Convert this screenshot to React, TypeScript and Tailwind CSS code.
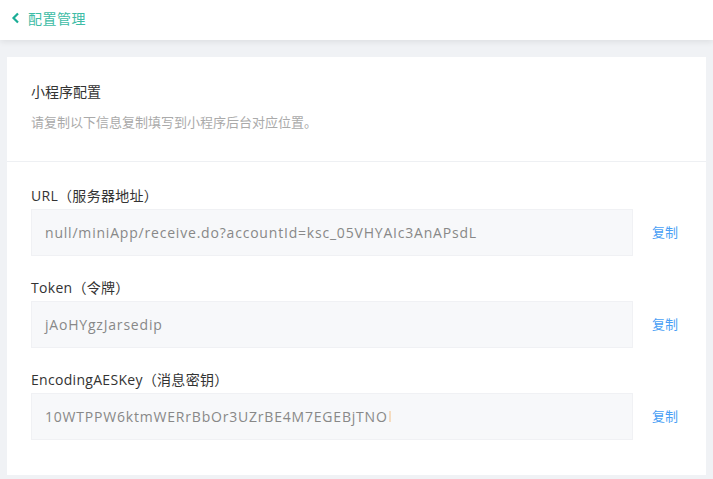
import React from "react";

const rows = [
  { label: "URL（服务器地址）", value: "null/miniApp/receive.do?accountId=ksc_05VHYAIc3AnAPsdL", clip: false },
  { label: "Token（令牌）", value: "jAoHYgzJarsedip", clip: false },
  { label: "EncodingAESKey（消息密钥）", value: "10WTPPW6ktmWERrBbOr3UZrBE4M7EGEBjTNO", clip: true },
];

export default function App() {
  return (
    <div
      className="w-[713px] h-[479px] bg-[#f0f2f5] overflow-hidden"
      style={{ fontFamily: '"Open Sans", "Noto Sans CJK SC", sans-serif' }}
    >
      <div className="h-[40px] bg-white flex items-center pl-[11px] pb-[4px] shadow-[0_2px_6px_rgba(0,0,0,0.08)] relative z-10">
        <svg width="10" height="12" viewBox="0 0 10 12" className="mr-[7px]">
          <path d="M7 1.5 L2.5 6 L7 10.5" fill="none" stroke="#1aad96" strokeWidth="2.2" />
        </svg>
        <span className="text-[14px] text-[#3dbca6] tracking-[0.5px]">配置管理</span>
      </div>
      <div className="mx-[7px] mt-[17px] h-[418px] bg-white">
        <div className="px-[24px] pt-[22px] h-[105px] border-b border-[#eef0f3]">
          <div className="text-[14px] text-[#333] leading-[26px]">小程序配置</div>
          <div className="text-[13px] text-[#aaa] mt-[7px] leading-[20px]">请复制以下信息复制填写到小程序后台对应位置。</div>
        </div>
        <div className="pl-[24px] pt-[24px] flex flex-col gap-[22px]">
          {rows.map((r) => (
            <div key={r.label}>
              <div className="text-[14px] text-[#333] leading-[20px] mb-[3px] tracking-[0.3px]">{r.label}</div>
              <div className="flex items-center">
                <div className="w-[602px] h-[47px] bg-[#f7f8fa] border border-[#f0f1f4] flex items-center pl-[13px]">
                  <span className="text-[14px] text-[#888] whitespace-nowrap tracking-[0.8px]">{r.value}</span>
                  {r.clip && <span className="ml-[1px] w-[2px] h-[11px] bg-[#f5dcc0]" />}
                </div>
                <span className="ml-[19px] text-[13px] text-[#4a9ff5]">复制</span>
              </div>
            </div>
          ))}
        </div>
      </div>
    </div>
  );
}
